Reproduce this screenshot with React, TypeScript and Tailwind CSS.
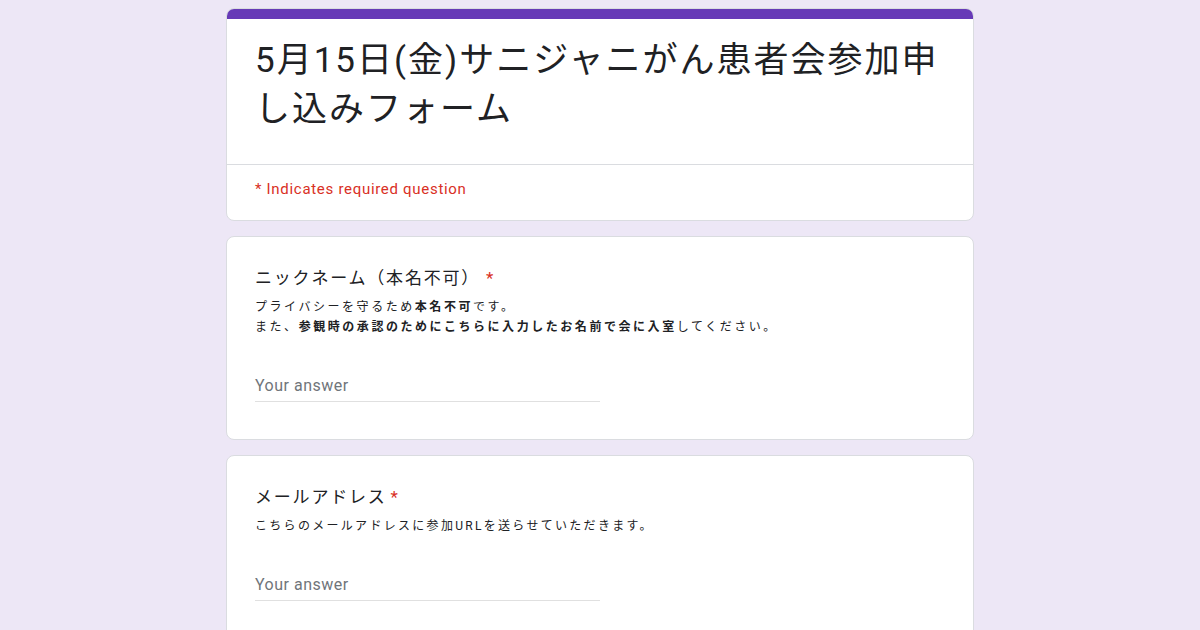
import React from 'react';

const jp = "font-['Roboto','Noto_Sans_CJK_JP',sans-serif]";

function AnswerField() {
  return (
    <div className="mt-[37px] w-1/2">
      <div className="pb-[3px] text-[16px] leading-[24px] tracking-[0.5px] text-[#70757a] border-b border-[#e0e0e0]">
        Your answer
      </div>
    </div>
  );
}

function QuestionCard({
  title,
  starGap,
  children,
}: {
  title: string;
  starGap: string;
  children: React.ReactNode;
}) {
  return (
    <div className="mt-[15px] rounded-[8px] border border-[#dadce0] bg-white px-[28px] pt-[29px] pb-[37px]">
      <div className="flex items-center text-[17px] leading-[24px] tracking-[1.8px] text-[#202124]">
        <span>{title}</span>
        <span className={`${starGap} text-[#d93025]`}>*</span>
      </div>
      <div className="mt-[7px] text-[12px] leading-[20px] tracking-[2.55px] text-[#202124]">
        {children}
      </div>
      <AnswerField />
    </div>
  );
}

export default function App() {
  return (
    <div className={`min-h-screen bg-[#ede7f6] pt-[8px] ${jp}`}>
      <div className="mx-auto w-[748px] pb-10">
        <div className="overflow-hidden rounded-[8px] border border-[#dadce0] bg-white">
          <div className="h-[10px] bg-[#673ab7]" />
          <div className="border-b border-[#dadce0] px-[28px] pt-[17px] pb-[30px]">
            <h1 className="text-[35px] leading-[49px] tracking-[2px] font-normal text-[#202124]">
              5月15日(金)サニジャニがん患者会参加申し込みフォーム
            </h1>
          </div>
          <div className="px-[28px] pt-[14px] pb-[21px] text-[15px] leading-[20px] tracking-[0.7px] text-[#d93025]">
            * Indicates required question
          </div>
        </div>

        <QuestionCard title="ニックネーム（本名不可）" starGap="ml-[6px]">
          <p>
            プライバシーを守るため<b className="font-bold">本名不可</b>です。
          </p>
          <p>
            また、<b className="font-bold">参観時の承認のためにこちらに入力したお名前で会に入室</b>してください。
          </p>
        </QuestionCard>

        <QuestionCard title="メールアドレス" starGap="ml-[4px]">
          <p className="tracking-[2.3px]">こちらのメールアドレスに参加URLを送らせていただきます。</p>
        </QuestionCard>
      </div>
    </div>
  );
}
